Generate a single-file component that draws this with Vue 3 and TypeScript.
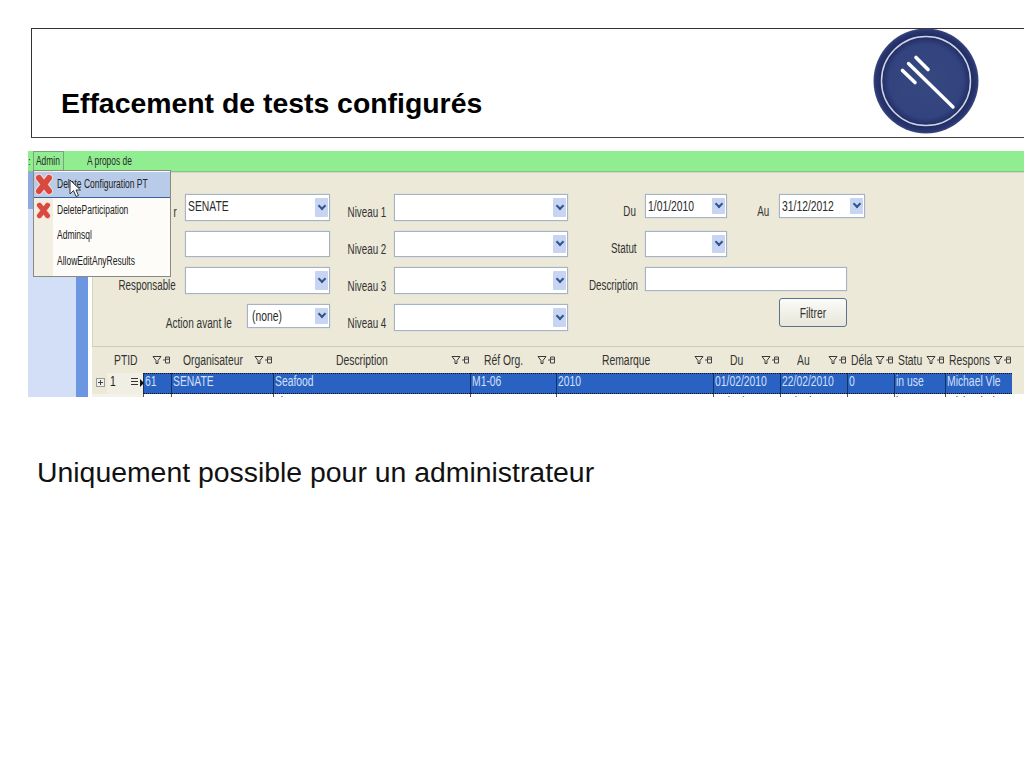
<script setup lang="ts">
interface Col { label: string; span: number; textPad: number; }
const headers: Col[] = [
  { label: 'PTID', span: 79, textPad: 22 },
  { label: 'Organisateur', span: 102, textPad: 12 },
  { label: 'Description', span: 197, textPad: 63 },
  { label: 'Réf Org.', span: 86, textPad: 14 },
  { label: 'Remarque', span: 157, textPad: 46 },
  { label: 'Du', span: 67, textPad: 17 },
  { label: 'Au', span: 67, textPad: 17 },
  { label: 'Déla', span: 47, textPad: 4 },
  { label: 'Statu', span: 51, textPad: 4 },
  { label: 'Respons', span: 67, textPad: 4 },
];
const trackTemplate = '51px 28px 102px 197px 86px 157px 67px 67px 47px 51px 67px';
const row1 = ['61', 'SENATE', 'Seafood', 'M1-06', '2010', '01/02/2010', '22/02/2010', '0', 'in use', 'Michael Vle'];
const row2 = ['62', 'SENATE', 'Lim', 'M1-06', '2010', '03/01/2010', '17/02/2010', '0', 'in use', 'Michael Vle'];
</script>

<template>
  <div class="page">
    <header class="title-box">
      <h1 class="title">Effacement de tests configurés</h1>
      <svg class="logo" width="108" height="108" viewBox="0 0 108 108">
        <defs>
          <radialGradient id="disc" cx="50%" cy="50%" r="50%">
            <stop offset="0%" stop-color="#36487f" />
            <stop offset="70%" stop-color="#32437f" />
            <stop offset="86%" stop-color="#212c62" />
            <stop offset="96%" stop-color="#2a3772" />
            <stop offset="100%" stop-color="#3d4a80" />
          </radialGradient>
        </defs>
        <circle cx="54" cy="54" r="52.5" fill="url(#disc)" />
        <circle cx="54" cy="54" r="44.5" fill="none" stroke="#cfd4e4" stroke-width="1.5" />
        <g stroke="#fff" stroke-linecap="round" fill="none">
          <path d="M36.5 36.5 L81 80" stroke-width="3.4" />
          <path d="M44 30.5 L56 42.5" stroke-width="3.6" />
          <path d="M30.5 43.5 L43 55.5" stroke-width="3.6" />
        </g>
      </svg>
    </header>

    <section class="shot">
      <div class="menubar">
        <span class="dots">:</span>
        <span class="menu-tab"><span class="sq">Admin</span></span>
        <span class="menu-about"><span class="sq">A propos de</span></span>
      </div>
      <div class="shot-body">
        <aside class="side"><div class="side-top"></div><div class="side-strip"></div></aside>
        <div class="main">
          <form class="filters" @submit.prevent>
            <span class="lab" style="grid-area: 1 / 1"><span class="sq sq-r">r</span></span>
            <div class="combo" style="grid-area: 1 / 2"><span class="sq">SENATE</span><i class="drop"></i></div>
            <span class="lab" style="grid-area: 1 / 3"><span class="sq sq-r">Niveau 1</span></span>
            <div class="combo" style="grid-area: 1 / 4"><i class="drop"></i></div>
            <span class="lab up pad-du" style="grid-area: 1 / 5"><span class="sq sq-r">Du</span></span>
            <div class="combo short" style="grid-area: 1 / 6"><span class="sq">1/01/2010</span><i class="drop"></i></div>
            <span class="lab up pad-au" style="grid-area: 1 / 7"><span class="sq sq-r">Au</span></span>
            <div class="combo short" style="grid-area: 1 / 8"><span class="sq">31/12/2012</span><i class="drop"></i></div>

            <div class="combo" style="grid-area: 2 / 2"></div>
            <span class="lab down" style="grid-area: 2 / 3"><span class="sq sq-r">Niveau 2</span></span>
            <div class="combo" style="grid-area: 2 / 4"><i class="drop"></i></div>
            <span class="lab" style="grid-area: 2 / 5"><span class="sq sq-r">Statut</span></span>
            <div class="combo" style="grid-area: 2 / 6"><i class="drop"></i></div>

            <span class="lab pad-resp" style="grid-area: 3 / 1"><span class="sq sq-r">Responsable</span></span>
            <div class="combo" style="grid-area: 3 / 2"><i class="drop"></i></div>
            <span class="lab down" style="grid-area: 3 / 3"><span class="sq sq-r">Niveau 3</span></span>
            <div class="combo" style="grid-area: 3 / 4"><i class="drop"></i></div>
            <span class="lab" style="grid-area: 3 / 5"><span class="sq sq-r">Description</span></span>
            <div class="combo desc" style="grid-area: 3 / 6 / auto / 9"></div>

            <div class="action" style="grid-area: 4 / 1 / auto / 3">
              <span class="lab action-lab down"><span class="sq sq-r">Action avant le</span></span>
              <div class="combo none"><span class="sq">(none)</span><i class="drop"></i></div>
            </div>
            <span class="lab down" style="grid-area: 4 / 3"><span class="sq sq-r">Niveau 4</span></span>
            <div class="combo" style="grid-area: 4 / 4"><i class="drop"></i></div>
            <button class="filter-btn" type="button" style="grid-area: 4 / 8"><span class="sq sq-c">Filtrer</span></button>
          </form>

          <div class="table">
            <div class="thead">
              <div v-for="h in headers" :key="h.label" class="th" :style="{ width: h.span + 'px', paddingLeft: h.textPad + 'px' }">
                <span class="sq">{{ h.label }}</span>
                <span class="th-icons">
                  <svg width="19" height="10" viewBox="0 0 19 10">
                    <path d="M1 1.5 H9 L6 5.5 V8.5 H4 V5.5 Z" fill="none" stroke="#3a3a3a" stroke-width="1" />
                    <path d="M11 5 H13 M13.5 2 V8 H17.5 V2 Z M13.5 4.2 H17.5" fill="none" stroke="#444" stroke-width="1" />
                  </svg>
                </span>
              </div>
            </div>
            <div class="tr selected" :style="{ gridTemplateColumns: trackTemplate }">
              <div class="rowhead">
                <i class="expander"></i><span class="sq num">1</span><i class="rowbox"></i><i class="rowicon"></i><i class="rowarrow"></i>
              </div>
              <div v-for="(c, i) in row1" :key="i" class="td"><span class="sq">{{ c }}</span></div>
            </div>
            <div class="tr plain" :style="{ gridTemplateColumns: trackTemplate }">
              <div class="rowhead"></div>
              <div v-for="(c, i) in row2" :key="i" class="td"><span class="sq">{{ c }}</span></div>
            </div>
          </div>
        </div>
      </div>

      <div class="menu">
        <div class="menu-item hot">
          <svg class="x" width="18" height="21" viewBox="0 0 18 21">
            <path d="M4 4 L14 17 M14 4 L4 17" stroke="#f3d9d2" stroke-width="8" stroke-linecap="round" />
            <path d="M4 4 L14 17 M14 4 L4 17" stroke="#d9493f" stroke-width="6" stroke-linecap="round" />
          </svg>
          <span class="sq">Delete Configuration PT</span>
        </div>
        <div class="menu-item">
          <svg class="x small" width="15" height="17" viewBox="0 0 18 21">
            <path d="M4 4 L14 17 M14 4 L4 17" stroke="#f3d9d2" stroke-width="8" stroke-linecap="round" />
            <path d="M4 4 L14 17 M14 4 L4 17" stroke="#d9493f" stroke-width="6" stroke-linecap="round" />
          </svg>
          <span class="sq">DeleteParticipation</span>
        </div>
        <div class="menu-item"><span class="sq">Adminsql</span></div>
        <div class="menu-item"><span class="sq">AllowEditAnyResults</span></div>
        <svg class="cursor" width="13" height="20" viewBox="0 0 13 20">
          <path d="M1 1 V15 L4.5 11.5 L7 17.5 L9.5 16.5 L7 11 H11.5 Z" fill="#fff" stroke="#333" stroke-width="1" />
        </svg>
      </div>
    </section>

    <p class="note">Uniquement possible pour un administrateur</p>
  </div>
</template>

<style>
html, body { margin: 0; background: #fff; }
</style>

<style scoped>
.page {
  width: 1024px;
  height: 768px;
  overflow: hidden;
  padding-top: 28px;
  box-sizing: border-box;
  font-family: "Liberation Sans", Arial, sans-serif;
  color: #000;
  background: #fff;
}
.title-box {
  position: relative;
  margin-left: 31px;
  height: 110px;
  box-sizing: border-box;
  border-top: 1px solid #333;
  border-left: 1px solid #333;
  border-bottom: 1px solid #444;
}
.title {
  margin: 0;
  padding: 58px 0 0 29px;
  font-size: 28.4px;
  line-height: 32px;
  font-weight: 700;
}
.logo { position: absolute; left: 840px; top: -2px; }

.shot {
  position: relative;
  margin: 13px 0 0 28px;
  width: 996px;
  height: 246px;
  overflow: hidden;
  font-size: 14px;
  color: #2a2a2a;
}
.sq {
  display: inline-block;
  transform: scaleX(0.74);
  transform-origin: left center;
  white-space: nowrap;
}
.sq-r { transform-origin: right center; }
.sq-c { transform-origin: center center; }

.menubar {
  display: flex;
  align-items: center;
  height: 21px;
  background: #90ee90;
  font-size: 12px;
  box-sizing: border-box;
  border-bottom: 1px solid #84c488;
}
.menubar .sq { transform: scaleX(0.7); }
.dots { width: 5px; font-size: 10px; }
.menu-tab {
  box-sizing: border-box;
  width: 31px;
  height: 20px;
  line-height: 18px;
  padding-left: 2px;
  border: 1px solid #7f9f88;
  border-bottom: 0;
}
.menu-about { margin-left: 23px; }

.shot-body { display: flex; height: 225px; }
.side {
  position: relative;
  width: 60px;
  display: flex;
  justify-content: flex-end;
  background: #d3def7;
  flex: none;
}
.side-top { position: absolute; left: 0; top: 0; width: 6px; height: 37px; background: #8eaae0; }
.side-strip { width: 12px; background: #6d96e0; }
.main {
  flex: 1;
  min-width: 0;
  margin-left: 4px;
  background: #ece9d8;
  border-top: 1px solid #d8d5c2;
  box-sizing: border-box;
}

.filters {
  display: grid;
  grid-template-columns: 93px 145px 64px 174px 77px 82px 52px 86px;
  grid-template-rows: 27px 26px 27px 27px;
  row-gap: 10px;
  padding-top: 21px;
  height: 173px;
  box-sizing: border-box;
  box-shadow: inset 1px 0 0 #d6d3c0;
}
.lab {
  align-self: end;
  display: block;
  height: 16px;
  line-height: 16px;
  color: #333;
  margin-bottom: 1px;
  text-align: right;
  padding-right: 8px;
}
.lab .sq { transform: scaleX(0.7); }
.lab.down { margin-bottom: 0; }
.lab.up { margin-bottom: 2px; }
.pad-du { padding-right: 9px; }
.pad-au { padding-right: 10px; }
.pad-resp { padding-right: 9px; }
.combo {
  position: relative;
  box-sizing: border-box;
  height: 100%;
  background: #fff;
  border: 1px solid #a6b3c6;
  box-shadow: 0 0 1px #b9c4d2;
  padding: 3px 0 0 2px;
  line-height: 16px;
}
.combo .drop {
  position: absolute;
  right: 1px;
  top: 3px;
  bottom: 3px;
  width: 13px;
  background: #c7d4f2;
  border-radius: 1px;
}
.combo .drop::after {
  content: "";
  position: absolute;
  left: 3.5px;
  top: 50%;
  width: 6px;
  height: 6px;
  margin-top: -5px;
  border-right: 2px solid #34548e;
  border-bottom: 2px solid #34548e;
  box-sizing: border-box;
  transform: rotate(45deg);
}
.short { height: 24px; }
.desc { width: 202px; height: 24px; }
.action { display: flex; }
.action-lab { flex: 1; padding-right: 15px; }
.action-lab .sq { transform: scaleX(0.72); }
.none { width: 83px; flex: none; height: 24px; padding-left: 4px; }
.filter-btn {
  width: 68px;
  height: 29px;
  margin-top: -6px;
  padding: 0;
  border: 1px solid #5a7390;
  border-radius: 3px;
  background: linear-gradient(#fbfbf8, #e8e6da);
  font: inherit;
  color: #333;
}

.table { height: 52px; overflow: hidden; border-top: 1px solid #cfccba; }
.thead { display: flex; height: 26px; align-items: center; color: #333; }
.th { position: relative; box-sizing: border-box; flex: none; height: 100%; line-height: 26px; }
.th-icons { position: absolute; right: 0; top: 8px; line-height: 0; }
.tr { display: grid; height: 21px; }
.rowhead { position: relative; background: #ece9d8; }
.selected .td {
  background: #2a62c4;
  color: #d3e0f6;
  border-top: 1px dotted #111;
  border-bottom: 1px dotted #111;
  border-left: 1px solid #15305f;
  padding-left: 1px;
  line-height: 15px;
  box-sizing: border-box;
}
.plain { background: #fff; }
.plain .rowhead { background: #f4f2e8; }
.plain .td {
  background: #fff;
  border-left: 1px solid #555;
  padding-left: 1px;
  line-height: 16px;
}
.expander {
  position: absolute; left: 4px; top: 5px; width: 9px; height: 9px;
  border: 1px solid #999; box-sizing: border-box; background: #f0f0ea;
}
.expander::before { content: ""; position: absolute; left: 1px; top: 3px; width: 5px; height: 1px; background: #444; }
.expander::after { content: ""; position: absolute; left: 3px; top: 1px; width: 1px; height: 5px; background: #444; }
.num { position: absolute; left: 18px; top: 0; color: #222; z-index: 1; }
.rowbox { position: absolute; left: 15px; top: 0; bottom: 0; right: 0; background: #f1efe3; z-index: 0; }
.rowicon {
  position: absolute; left: 39px; top: 5px; width: 7px; height: 8px; z-index: 1;
  background: repeating-linear-gradient(#333 0 1px, transparent 1px 3px);
}
.rowarrow {
  position: absolute; left: 48px; top: 6px; width: 0; height: 0; z-index: 1;
  border-left: 4px solid #111; border-top: 4px solid transparent; border-bottom: 4px solid transparent;
}

.menu {
  position: absolute;
  left: 5px;
  top: 19px;
  width: 138px;
  height: 107px;
  box-sizing: border-box;
  border: 1px solid #8a8a80;
  padding-top: 1px;
  background: linear-gradient(90deg, #f2efe2 0 19px, #fdfcf8 19px);
  font-size: 12.5px;
  color: #222;
}
.menu .sq { transform: scaleX(0.68); }
.menu-item {
  position: relative;
  height: 25.5px;
  line-height: 25px;
  padding-left: 23px;
  box-sizing: border-box;
}
.hot { background: #b8cbe8; border: 1px solid #3b5f9f; border-width: 0 0 1px; line-height: 24px; }
.x { position: absolute; left: 1px; top: 2px; }
.x.small { left: 2px; top: 4px; }
.cursor { position: absolute; left: 35px; top: 8px; }

.note {
  margin: 60px 0 0 37px;
  font-size: 28.4px;
  line-height: 30px;
  color: #111;
}
</style>
